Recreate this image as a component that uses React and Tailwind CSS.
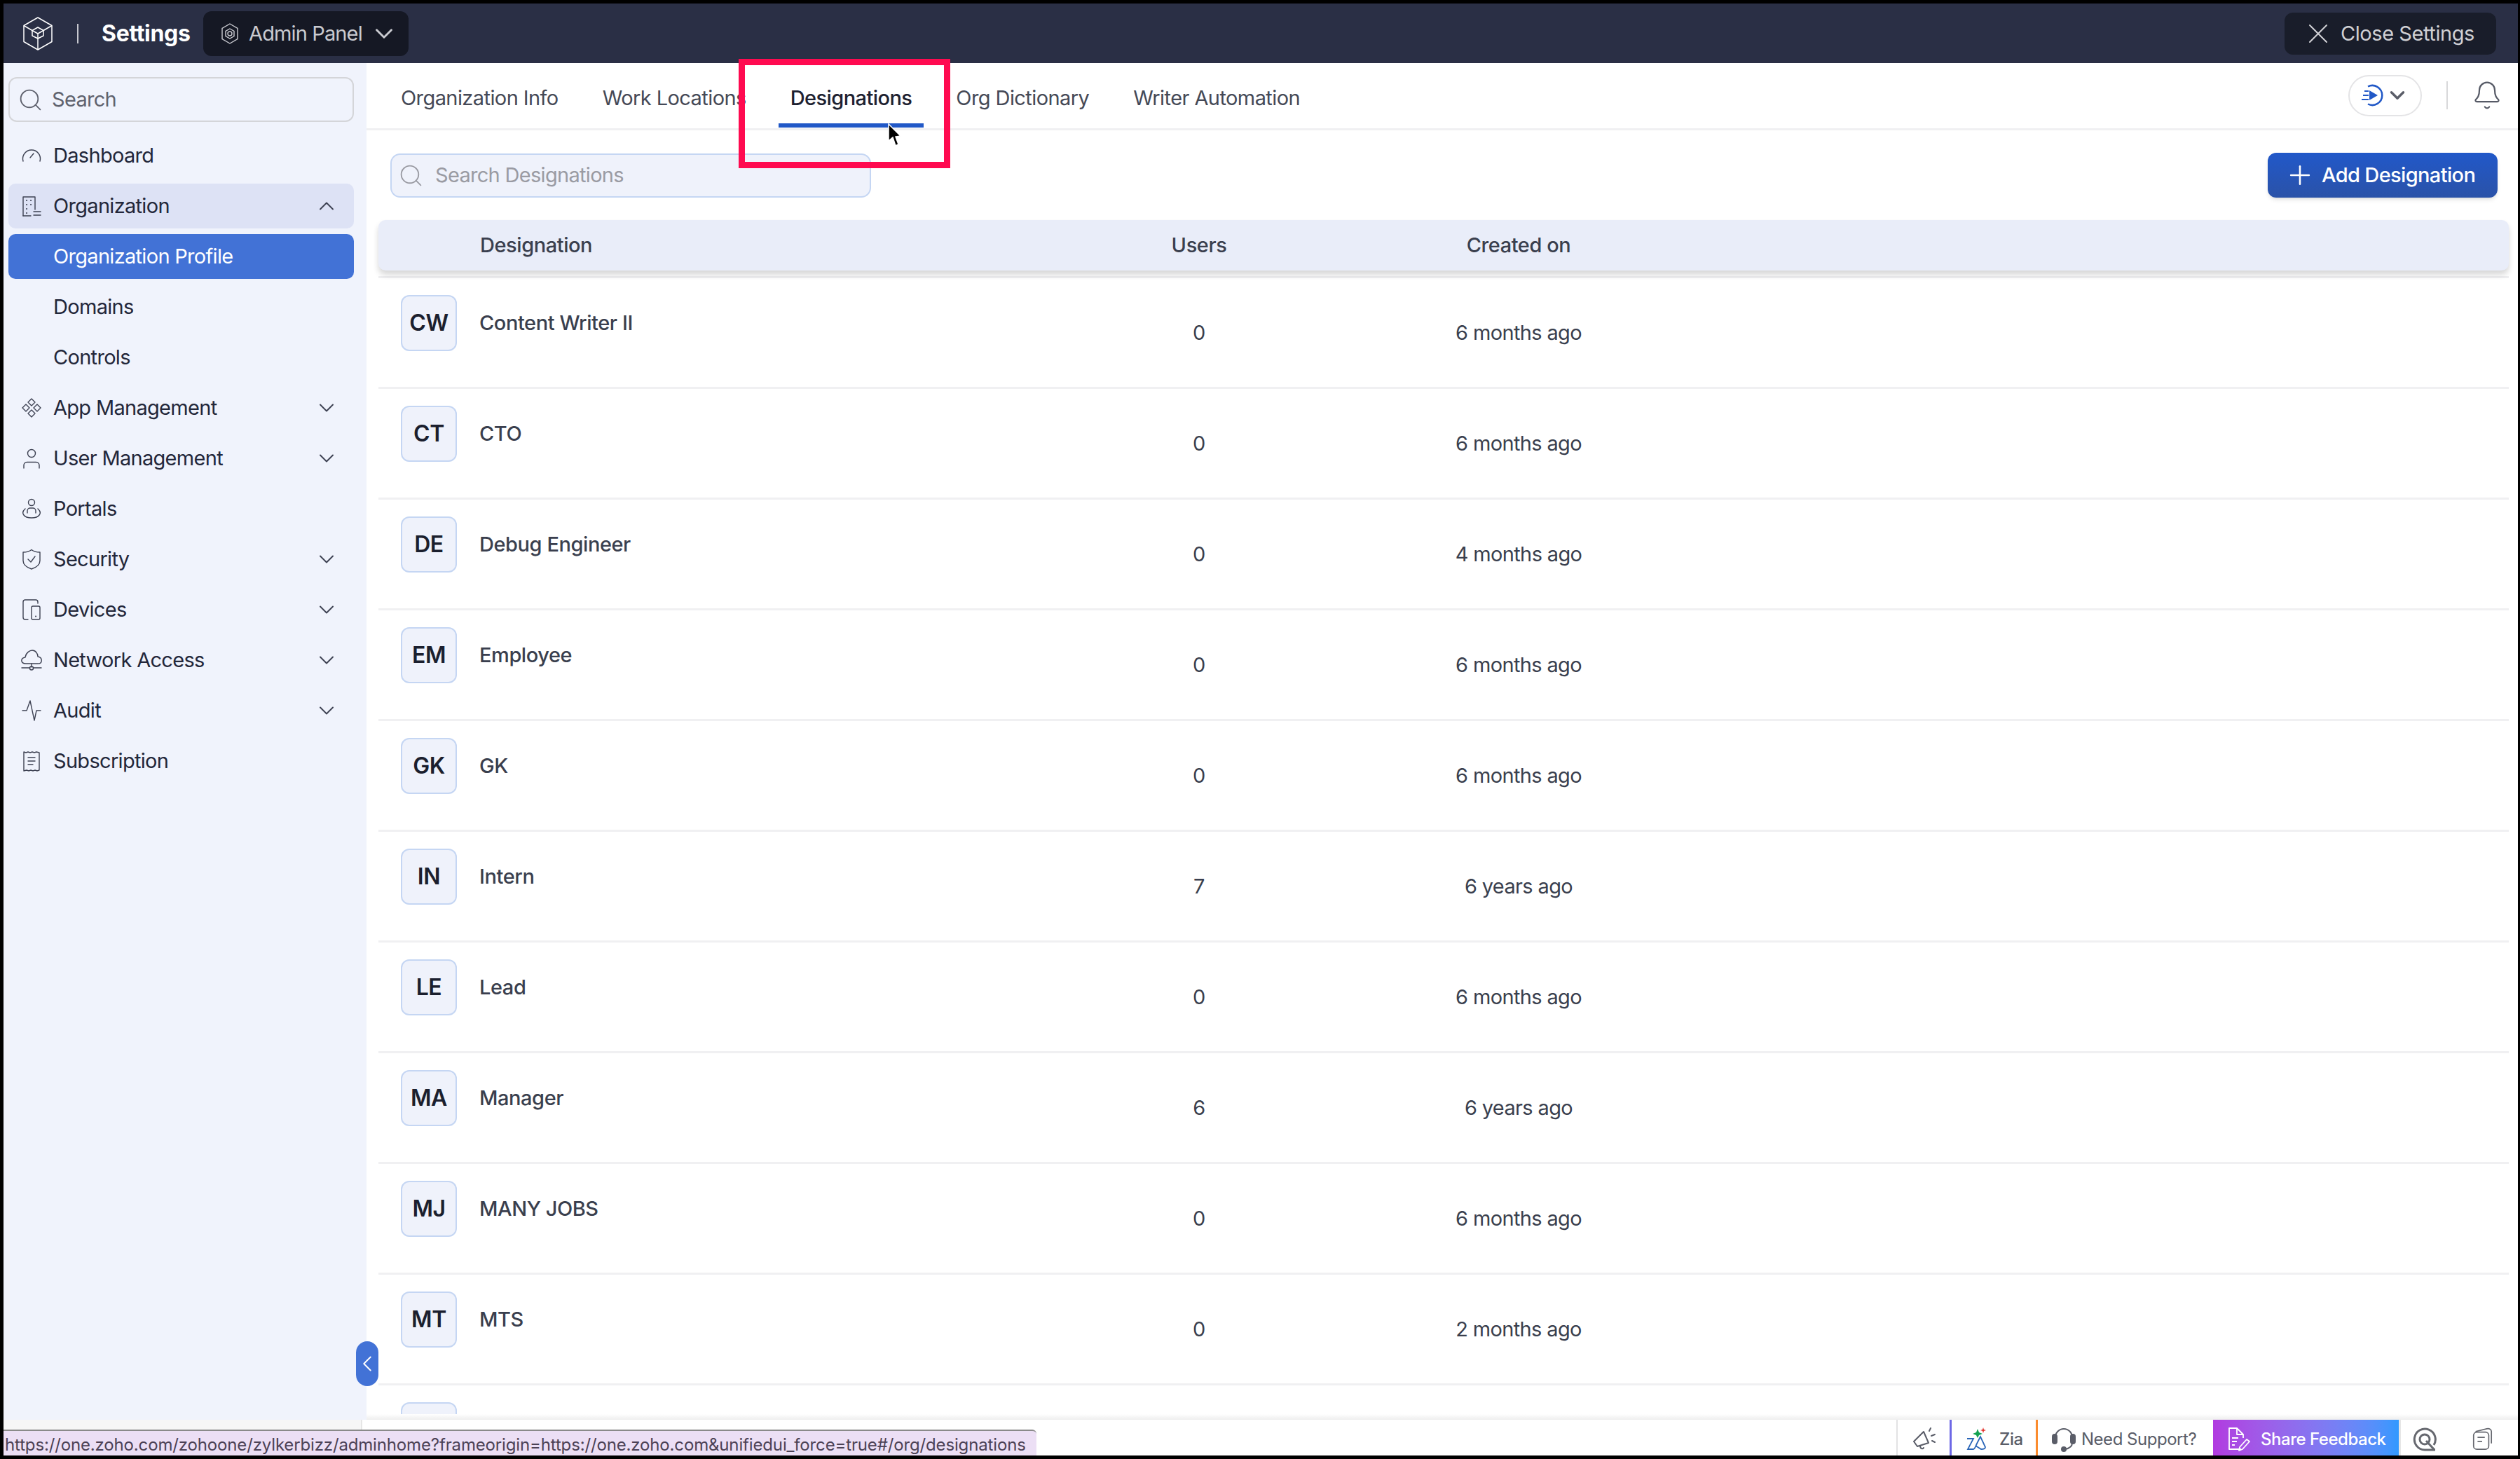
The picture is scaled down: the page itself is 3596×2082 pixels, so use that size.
import { Search, ChevronDown, ChevronUp, ChevronLeft, X, Plus, Bell } from "lucide-react";

const stroke = { fill: "none", stroke: "currentColor", strokeWidth: 1.4, strokeLinecap: "round", strokeLinejoin: "round" };

const Gauge = () => (
  <svg viewBox="0 0 30 30" className="w-[30px] h-[30px]" {...stroke}>
    <path d="M3 23 A12.5 12.5 0 1 1 27 23" />
    <path d="M13 18 L18 12" />
  </svg>
);
const OrgIcon = () => (
  <svg viewBox="0 0 30 30" className="w-[30px] h-[30px]" {...stroke}>
    <path d="M3 29 V2 H20 V20" />
    <path d="M3 29 H14" />
    <path d="M18 23 H28 M18 28 H28" />
    <path d="M8 7h.1M14 7h.1M8 13h.1M14 13h.1M8 19h.1M8 25h.1" strokeWidth="2" />
  </svg>
);
const AppIcon = () => (
  <svg viewBox="0 0 30 30" className="w-[30px] h-[30px]" {...stroke}>
    <path d="M15 2 L20 7 L15 12 L10 7 Z" />
    <path d="M15 18 L20 23 L15 28 L10 23 Z" />
    <path d="M7 10 L12 15 L7 20 L2 15 Z" />
    <path d="M23 10 L28 15 L23 20 L18 15 Z" />
  </svg>
);
const UserIcon = () => (
  <svg viewBox="0 0 30 30" className="w-[30px] h-[30px]" {...stroke}>
    <circle cx="15" cy="8" r="5.5" />
    <path d="M4 29 V25 A4.5 4.5 0 0 1 8.500 20.500 H21.500 A4.5 4.5 0 0 1 26 25 V29" />
  </svg>
);
const PortalIcon = () => (
  <svg viewBox="0 0 30 30" className="w-[30px] h-[30px]" {...stroke}>
    <circle cx="15" cy="6" r="4.500" />
    <path d="M9 21 V18 A4 4 0 0 1 13 14 H17 A4 4 0 0 1 21 18 V21" />
    <path d="M6 15 C-1 21 4 28 15 28 C26 28 31 21 24 15" />
  </svg>
);
const ShieldIcon = () => (
  <svg viewBox="0 0 30 30" className="w-[30px] h-[30px]" {...stroke}>
    <path d="M15 1.500 C18 4 23 5 27 5 V17 C27 23 21 27 15 29 C9 27 3 23 3 17 V5 C7 5 12 4 15 1.500 Z" />
    <path d="M10 15 L14 19 L20 11" />
  </svg>
);
const DeviceIcon = () => (
  <svg viewBox="0 0 30 30" className="w-[30px] h-[30px]" {...stroke}>
    <path d="M24 6 V4 A3 3 0 0 0 21 1 H6 A3 3 0 0 0 3 4 V26 A3 3 0 0 0 6 29 H10" />
    <rect x="15" y="10" width="12" height="19" rx="2" />
    <path d="M21 24.500h.1" strokeWidth="2" />
  </svg>
);
const CloudIcon = () => (
  <svg viewBox="0 0 30 30" className="w-[30px] h-[30px]" {...stroke}>
    <path d="M7 20 C-1 20 -1 12 6 11 C7 4 13 1 16 1 C21 1 24 6 24 10 C31 11 31 20 24 20 Z" />
    <path d="M15 20 V25 M1 26 H12 M18 26 H29" />
    <circle cx="15" cy="26.500" r="2.500" />
  </svg>
);
const AuditIcon = () => (
  <svg viewBox="0 0 30 30" className="w-[30px] h-[30px]" {...stroke}>
    <path d="M2 15 H8 L13 1 L19 29 L22 15 H28" />
  </svg>
);
const ReceiptIcon = () => (
  <svg viewBox="0 0 30 30" className="w-[30px] h-[30px]" {...stroke}>
    <path d="M4 2 L7 3 L10 2 L13 3 L16 2 L19 3 L22 2 L26 3 V28 L23 29 L20 28 L17 29 L14 28 L11 29 L8 28 L4 29 Z" />
    <path d="M10 10 H20 M10 15 H20 M10 20 H17" />
  </svg>
);

const navItems = [
  { label: "Dashboard", icon: Gauge },
  { label: "Organization", icon: OrgIcon, open: true },
  { label: "Organization Profile", sub: true, active: true },
  { label: "Domains", sub: true },
  { label: "Controls", sub: true },
  { label: "App Management", icon: AppIcon, caret: true },
  { label: "User Management", icon: UserIcon, caret: true },
  { label: "Portals", icon: PortalIcon },
  { label: "Security", icon: ShieldIcon, caret: true },
  { label: "Devices", icon: DeviceIcon, caret: true },
  { label: "Network Access", icon: CloudIcon, caret: true },
  { label: "Audit", icon: AuditIcon, caret: true },
  { label: "Subscription", icon: ReceiptIcon },
];

const tabs = ["Organization Info", "Work Locations", "Designations", "Org Dictionary", "Writer Automation"];

const rows = [
  ["CW", "Content Writer II", "0", "6 months ago"],
  ["CT", "CTO", "0", "6 months ago"],
  ["DE", "Debug Engineer", "0", "4 months ago"],
  ["EM", "Employee", "0", "6 months ago"],
  ["GK", "GK", "0", "6 months ago"],
  ["IN", "Intern", "7", "6 years ago"],
  ["LE", "Lead", "0", "6 months ago"],
  ["MA", "Manager", "6", "6 years ago"],
  ["MJ", "MANY JOBS", "0", "6 months ago"],
  ["MT", "MTS", "0", "2 months ago"],
  ["", "", "", ""],
];

const Sidebar = () => (
  <aside className="w-[518px] shrink-0 bg-[#f0f3fc] pl-[7px] pr-[18px] pt-[20px] relative z-10 tracking-[-0.024em]">
    <div className="h-[64px] flex items-center border-[2px] border-[#d4d5d9] rounded-[12px] pl-[11px] gap-[12px] text-[#5f626e]">
      <Search size={37} strokeWidth={1.2} />
      <span>Search</span>
    </div>
    <nav className="mt-[16px] flex flex-col gap-[8px]">
      {navItems.map((item) => (
        <div
          key={item.label}
          className={`h-[64px] flex items-center rounded-[10px] pl-[18px] pr-[21px] ${
            item.active ? "bg-[#4272d6] text-white" : item.open ? "bg-[#dde2f5] text-[#23273a]" : "text-[#23273a]"
          }`}
        >
          <span className="w-[30px] h-[30px] mr-[17px] text-[#3d4152]">{item.icon && <item.icon />}</span>
          <span className="flex-1 ml-[-1px]">{item.label}</span>
          {item.caret && <ChevronDown size={36} strokeWidth={1.3} className="text-[#3d4152]" />}
          {item.open && <ChevronUp size={36} strokeWidth={1.3} className="text-[#3d4152]" />}
        </div>
      ))}
    </nav>
    <div className="absolute right-[-17px] bottom-[48px] w-[32px] h-[64px] rounded-full bg-[#4272d6] text-white flex items-center justify-center">
      <ChevronLeft size={38} strokeWidth={1.2} className="shrink-0" />
    </div>
  </aside>
);

const TopBar = () => (
  <header className="h-[85px] shrink-0 bg-[#2a2f45] flex items-center pl-[28px] pr-[31px]">
    <svg viewBox="0 0 42 48" className="w-[42px] h-[48px] text-white" fill="none" stroke="currentColor" strokeWidth="1.500" strokeLinejoin="round">
      <path d="M21 1 L41 12.500 V35.500 L21 47 L1 35.500 V12.500 Z" />
      <path d="M1 12.500 L13 19.500 M41 12.500 L29 19.500 M21 47 V31" />
      <path d="M21 15 L29 19.500 V27 L21 31 L13 27 V19.500 Z" />
      <path d="M13 19.500 L21 24 L29 19.500 M21 24 V31" />
    </svg>
    <div className="w-[2px] h-[28px] bg-[#c6c7ce] ml-[35px]" />
    <span className="ml-[33px] text-white text-[32px] font-bold tracking-[-0.01em] w-[145px]">Settings</span>
    <div className="w-[293px] h-[64px] rounded-[12px] bg-[#151824] flex items-center pl-[26px] text-[#c9cad0]">
      <svg viewBox="0 0 24 30" className="w-[24px] h-[30px]" fill="none" stroke="currentColor" strokeWidth="1.400">
        <path d="M12 1 L23 7.500 V22.500 L12 29 L1 22.500 V7.500 Z" />
        <circle cx="12" cy="15" r="3" />
        <path d="M12 8 L18 11.500 V18.500 L12 22 L6 18.500 V11.500 Z" />
      </svg>
      <span className="ml-[15px] w-[172px] tracking-[-0.03em]">Admin Panel</span>
      <ChevronDown size={42} strokeWidth={1.7} className="shrink-0" />
    </div>
    <div className="flex-1" />
    <div className="w-[302px] h-[60px] rounded-[12px] bg-[#191d2a] flex items-center pl-[24px] text-[#d0d0d4]">
      <X size={48} strokeWidth={1} className="shrink-0" />
      <span className="ml-[8px]">Close Settings</span>
    </div>
  </header>
);

const TabBar = () => (
  <div className="h-[96px] shrink-0 border-b-[3px] border-[#f0f0f2] flex items-start pl-[32px] pr-[22px]">
    <div className="flex gap-[29px] h-[92px] tracking-[-0.02em]">
      {tabs.map((tab) => (
        <div
          key={tab}
          className={`px-[17px] pt-[28px] h-full whitespace-nowrap ${
            tab === "Designations" ? "text-[#1d2130] font-medium" : "text-[#454956]"
          }`}
        >
          <div>{tab}</div>
          {tab === "Designations" && <div className="h-[6px] bg-[#2158c7] mx-[-17px] mt-[14px]" />}
        </div>
      ))}
    </div>
    <div className="flex-1" />
    <div className="flex items-center h-[92px]">
      <div className="w-[105px] h-[59px] rounded-full border-[2px] border-[#e4e4e6] flex items-center justify-center gap-[3px]">
        <svg viewBox="0 0 32 32" className="w-[32px] h-[32px] text-[#2158c7] shrink-0" fill="none" stroke="currentColor" strokeWidth="2.500">
          <path d="M10 3.500 A14 14 0 1 1 10 28.500" />
          <path d="M12 9 L24 16 L12 23 Z" fill="currentColor" stroke="none" />
          <path d="M5 10 H11 M3 16 H11 M1 22 H11" strokeWidth="2" />
        </svg>
        <ChevronDown size={34} strokeWidth={2.4} className="text-[#5a5d68] shrink-0" />
      </div>
      <div className="w-[2px] h-[40px] bg-[#d8d8da] ml-[35px]" />
      <Bell size={44} strokeWidth={1.2} className="text-[#565a66] ml-[34px]" />
    </div>
  </div>
);

const Row = ({ abbr, name, users, created }) => (
  <div className="h-[158px] shrink-0 border-b-[3px] border-[#f0f0f2] flex items-center relative">
    <div className="self-start pt-[24px] pl-[32px] flex w-[1044px]">
      <div className="w-[80px] h-[80px] shrink-0 rounded-[12px] border-[2px] border-[#c5d6f3] bg-[#eff2fb] flex items-center justify-center text-[32px] font-semibold text-[#1b1f2e]">
        {abbr}
      </div>
      <div className="ml-[32px] h-[80px] flex items-center font-medium text-[#3a3f4e]">{name}</div>
    </div>
    <div className="w-[254px] text-center text-[#3a3f4e]">{users}</div>
    <div className="w-[400px] text-center ml-[129px] text-[#3a3f4e] tracking-[-0.022em]">{created}</div>
  </div>
);

const Main = () => (
  <main className="flex-1 min-w-0 bg-white flex flex-col relative">
    <TabBar />
    <div className="h-[128px] shrink-0 flex items-center pl-[34px] pr-[29px]">
      <div className="w-[686px] h-[63px] rounded-[14px] border-[2px] border-[#c5d6f3] bg-[#eff2fb] flex items-center pl-[9px] gap-[16px] text-[#9a9ba3] tracking-[-0.024em]">
        <Search size={37} strokeWidth={1.2} />
        <span>Search Designations</span>
      </div>
      <div className="flex-1" />
      <div className="w-[328px] h-[64px] rounded-[12px] bg-gradient-to-b from-[#2158c9] to-[#2a52a8] shadow-md flex items-center pl-[24px] gap-[9px] text-white font-medium tracking-[-0.022em]">
        <Plus size={44} strokeWidth={1.4} />
        <span>Add Designation</span>
      </div>
    </div>
    <div className="pl-[17px] pr-[13px] flex flex-col">
      <div className="h-[72px] shrink-0 rounded-[10px] bg-[#e9edf9] shadow-[0_6px_8px_rgba(0,0,0,0.16)] flex items-center font-medium text-[#3a3f4e] relative z-10">
        <div className="w-[1044px] pl-[145px]">Designation</div>
        <div className="w-[254px] text-center">Users</div>
        <div className="w-[400px] text-center ml-[129px]">Created on</div>
      </div>
      <div className="h-[11px] shrink-0 border-b-[3px] border-[#f0f0f2]" />
      {rows.map(([abbr, name, users, created]) => (
        <Row key={name || "partial"} abbr={abbr} name={name} users={users} created={created} />
      ))}
    </div>
    <div className="absolute left-0 right-0 bottom-0 h-[8px] bg-gradient-to-b from-white to-[#eeeeee] z-10" />
    {/* annotation box drawn on top of the screenshot */}
    <div className="absolute left-[531px] top-[-6px] w-[302px] h-[156px] border-[9px] border-[#ff0a50] z-10" />
    <svg viewBox="0 0 20 36" className="absolute left-[743px] top-[86px] w-[20px] h-[36px] z-10">
      <path d="M2 1 L2 25 L8 20 L12 32 L16 30 L12 19 L19 18 Z" fill="#000" stroke="#fff" strokeWidth="1.500" />
    </svg>
  </main>
);

const Footer = () => (
  <footer className="h-[51px] shrink-0 bg-white flex items-stretch text-[24px] relative z-20">
    <div className="w-[512px] bg-[#f6f6f6] border-r-[2px] border-[#e6e6e6]" />
    <div className="flex-1" />
    <div className="w-[76px] border-l-[2px] border-[#e2e2e4] flex items-center justify-center pt-[4px] text-[#5a5d68]">
      <svg viewBox="0 0 34 38" className="w-[34px] h-[38px]" fill="none" stroke="currentColor" strokeWidth="2" strokeLinecap="round" strokeLinejoin="round">
        <path d="M3 22 L17 8 L24 24 L8 29 Z" />
        <path d="M12 28 C12 33 16 33 17 31" />
        <path d="M25 7 L27 3 M28 14 L33 12 M29 21 L33 23" />
      </svg>
    </div>
    <div className="w-[123px] border-l-[3px] border-[#6d68e6] flex items-center pl-[20px] pt-[4px] text-[#5a5d68] font-medium">
      <svg viewBox="0 0 30 34" className="w-[30px] h-[34px]" fill="none">
        <path d="M2 16 H11 L3 31 H11 C13 31 14 27 16 23 L21 13 L28 28 C28 31 24 31 22 31 L14 26" stroke="#2a66b8" strokeWidth="1.800" />
        <path d="M17 2 L19 7 L24 9 L19 11 L17 15 L15 11 L10 9 L15 7 Z" fill="#12a150" />
        <path d="M25 0 L26 3 L29 4 L26 5 L25 8 L24 5 L21 4 L24 3 Z" fill="#e2342c" />
      </svg>
      <span className="ml-[18px]">Zia</span>
    </div>
    <div className="w-[253px] border-l-[3px] border-[#fb8c2e] flex items-center pl-[20px] pt-[4px] text-[#5a5d68]">
      <svg viewBox="0 0 34 38" className="w-[34px] h-[38px]" fill="none" stroke="currentColor" strokeWidth="2">
        <path d="M5 16 A12 12 0 0 1 29 16 V24 C29 30 24 32 19 33" />
        <rect x="1" y="12" width="6" height="13" rx="3" fill="currentColor" />
        <rect x="27" y="12" width="6" height="13" rx="3" fill="currentColor" />
        <circle cx="17" cy="33" r="3" fill="currentColor" />
      </svg>
      <span className="ml-[8px] tracking-[-0.02em]">Need Support?</span>
    </div>
    <div className="w-[265px] bg-gradient-to-r from-[#b13ae0] to-[#2f99ff] flex items-center pl-[20px] pt-[4px] text-white font-medium">
      <svg viewBox="0 0 34 36" className="w-[34px] h-[36px]" fill="none" stroke="currentColor" strokeWidth="1.800" strokeLinejoin="round">
        <path d="M20 32 H3 V2 H14 L23 11 V16" />
        <path d="M14 2 V11 H23 M7 16 H16 M7 21 H14 M7 26 H11" />
        <path d="M17 34 L18 29 L28 18 L32 21 L22 32 Z" />
      </svg>
      <span className="ml-[14px] tracking-[-0.02em]">Share Feedback</span>
    </div>
    <div className="w-[170px] border-l-[3px] border-[#e6e6e6] flex items-center pl-[16px] pt-[4px] text-[#66686f]">
      <svg viewBox="0 0 36 36" className="w-[36px] h-[36px] shrink-0" fill="none" stroke="currentColor" strokeWidth="3">
        <path d="M33 33 H18 A15 15 0 1 1 31 26" />
        <circle cx="18" cy="18" r="7" />
        <path d="M20 20 L32 33" />
      </svg>
      <svg viewBox="0 0 34 36" className="w-[32px] h-[34px] shrink-0 ml-[48px]" fill="none" stroke="currentColor" strokeWidth="1.800">
        <path d="M7 6 L24 2 C28 1 31 3 31 6 V24" />
        <rect x="4" y="7" width="23" height="26" rx="5" />
        <path d="M10 15 H21 M10 21 H17" />
      </svg>
    </div>
  </footer>
);

export default function App() {
  return (
    <div className="w-[3596px] h-[2082px] bg-black pt-[5px] pl-[5px] pr-[3px] pb-[5px] relative overflow-hidden font-['Inter',sans-serif] text-[29px] leading-[44px] tracking-[-0.015em]">
      <div className="h-full flex flex-col bg-white overflow-hidden">
        <TopBar />
        <div className="flex-1 min-h-0 flex">
          <Sidebar />
          <Main />
        </div>
        <Footer />
      </div>
      <div className="absolute left-[5px] bottom-[5px] h-[37px] w-[1474px] bg-[#ecdff5] border-t-[2px] border-[#8a8a8a] rounded-tr-[6px] flex items-center pl-[2px] pt-[5px] text-[24px] text-[#4c4256] tracking-[-0.15px] z-30 whitespace-nowrap">
        https://one.zoho.com/zohoone/zylkerbizz/adminhome?frameorigin=https://one.zoho.com&amp;unifiedui_force=true#/org/designations
      </div>
    </div>
  );
}
